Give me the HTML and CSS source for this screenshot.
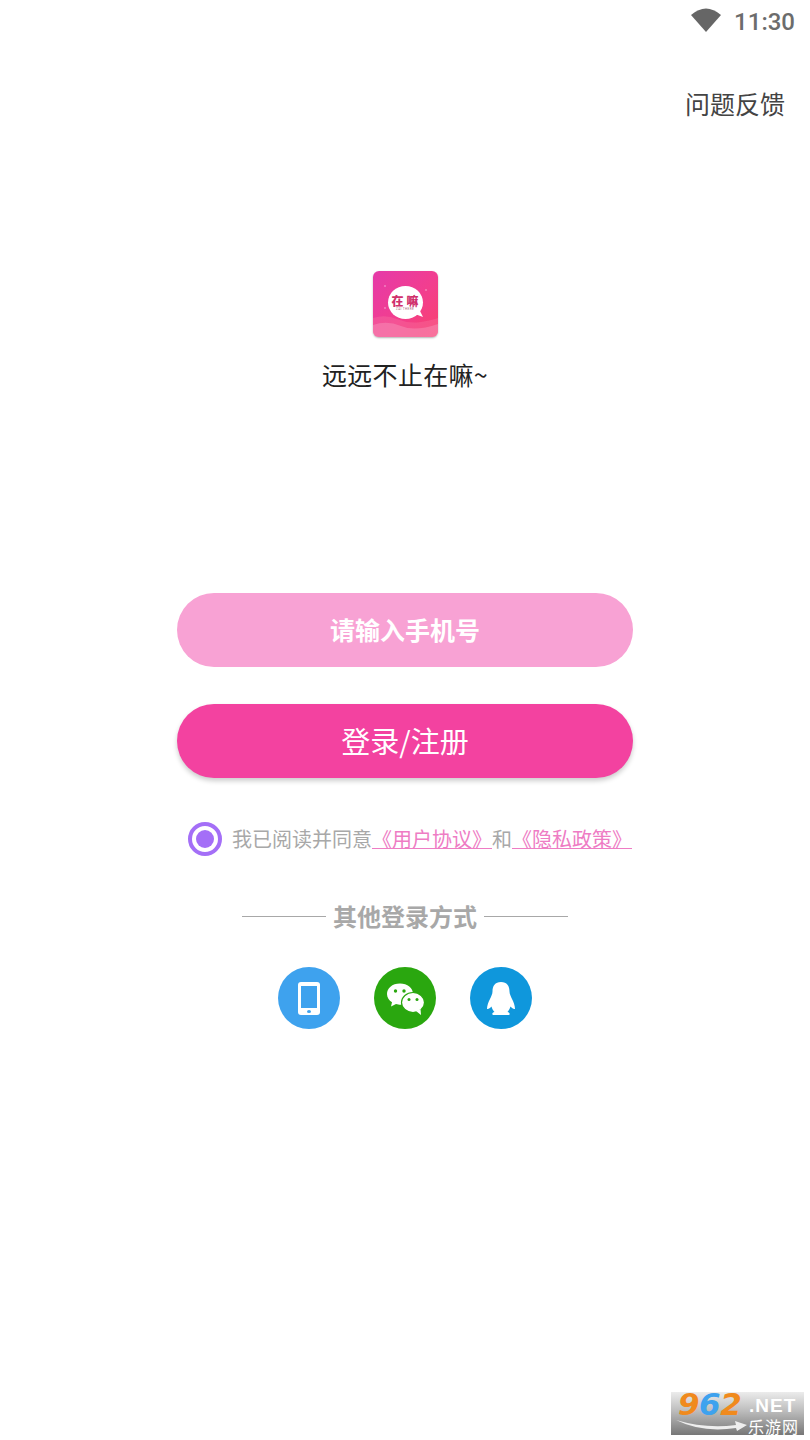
FILE: index.html
```html
<!DOCTYPE html>
<html lang="zh">
<head>
<meta charset="utf-8">
<title>登录</title>
<link rel="stylesheet" href="styles.css">
</head>
<body>
<div class="page">
  <div class="status">
    <svg class="wifi" width="32" height="26" viewBox="0 0 32 26"><path d="M1 8 Q16 -5 31 8 L16 25 Z" fill="#666"/></svg>
    <span class="time">11:30</span>
  </div>
  <div class="feedback-row"><span class="feedback">问题反馈</span></div>
  <div class="brand">
    <div class="app-icon">
      <svg class="waves" width="65" height="66" viewBox="0 0 65 66">
        <circle cx="12" cy="15" r="0.800" fill="#fff" opacity=".6"/>
        <circle cx="53" cy="19" r="0.800" fill="#fff" opacity=".6"/>
        <circle cx="12" cy="37" r="0.800" fill="#fff" opacity=".6"/>
        <path d="M0 47 Q12 43 24 48 T48 51 T65 47 V66 H0 Z" fill="#f7709f" opacity=".4"/>
        <path d="M0 54 Q14 49 28 55 T65 53 V66 H0 Z" fill="#f7a0c4" opacity=".4"/>
        <path d="M46 38 L50 46 L42 43 Z" fill="#fff"/>
      </svg>
      <div class="bubble">
        <span class="bubble-name">在嘛</span>
        <span class="bubble-sub">ZAI THERE</span>
      </div>
    </div>
    <p class="slogan">远远不止在嘛~</p>
  </div>
  <div class="actions">
    <div class="btn btn-phone">请输入手机号</div>
    <div class="btn btn-login">登录/注册</div>
  </div>
  <div class="agree">
    <span class="radio"><span class="radio-dot"></span></span>
    <span class="agree-text">我已阅读并同意<a class="link">《用户协议》</a>和<a class="link">《隐私政策》</a></span>
  </div>
  <div class="divider"><span class="rule"></span><span class="divider-text">其他登录方式</span><span class="rule"></span></div>
  <div class="socials">
    <span class="social social-phone">
      <svg width="62" height="62" viewBox="0 0 62 62"><rect x="20" y="15" width="22" height="33" rx="3" fill="#fff"/><rect x="23" y="19" width="16" height="22" fill="#3ea2ee"/><ellipse cx="31" cy="44.500" rx="2" ry="1.600" fill="#3ea2ee"/></svg>
    </span>
    <span class="social social-wechat">
      <svg width="62" height="62" viewBox="0 0 62 62">
        <path d="M26 16.500 C18 16.500 13 21.500 13 27 C13 30.500 15 33.500 18 35.200 L17 39.500 L22 37 C23.500 37.500 25 37.700 27 37.700 C36 37.700 39 32 39 27 C39 21 33.500 16.500 26 16.500 Z" fill="#fff"/>
        <ellipse cx="39" cy="35.500" rx="11.500" ry="10" fill="#fff" stroke="#2aa70f" stroke-width="1.200"/>
        <path d="M42 44 L47 48 L46.500 42 Z" fill="#fff"/>
        <circle cx="21.500" cy="24" r="1.700" fill="#2aa70f"/><circle cx="30" cy="24" r="1.700" fill="#2aa70f"/>
        <circle cx="35" cy="32.500" r="1.500" fill="#2aa70f"/><circle cx="43" cy="32.500" r="1.500" fill="#2aa70f"/>
      </svg>
    </span>
    <span class="social social-qq">
      <svg width="62" height="62" viewBox="0 0 62 62"><path d="M31 15 C25 15 22.500 19 22.500 24.500 C22.500 27 21 29.500 20 32 C18.500 35 17 38.500 17 42 C18.500 42.500 20 41 21.500 39.500 C22 41.500 23 43.500 24.500 45 C22.500 45.500 21.500 47 23 48 H39 C40.500 47 39.500 45.500 37.500 45 C39 43.500 40 41.500 40.500 39.500 C42 41 43.500 42.500 45 42 C45 38.500 43.500 35 42 32 C41 29.500 39.500 27 39.500 24.500 C39.500 19 37 15 31 15 Z" fill="#fff"/></svg>
    </span>
  </div>
  <div class="watermark">
    <svg class="wm-swoosh" width="72" height="14" viewBox="0 0 72 14"><path d="M0 0 Q30 9 60 5 L59 1 L71 5 L61 11 L60 8 Q26 13 0 0 Z" fill="#eee"/></svg>
    <span class="wm-num"><span class="wm-o">9</span><span class="wm-b">6</span><span class="wm-o">2</span></span>
    <span class="wm-net">.NET</span>
    <span class="wm-cn">乐游网</span>
  </div>
</div>
</body>
</html>
```
FILE: styles.css
```css
* { box-sizing: border-box; }
html, body { margin: 0; padding: 0; background: #fff; }
body { font-family: "Noto Sans CJK SC", "Roboto", sans-serif; }
.page { position: relative; width: 810px; height: 1440px; overflow: hidden; background: #fff; }

.status { display: flex; justify-content: flex-end; align-items: center; height: 40px; padding: 4px 15px 0 0; }
.wifi { margin-right: 12px; margin-bottom: 4px; }
.time { font-family: "Roboto", sans-serif; font-weight: 500; font-size: 24px; line-height: 36px; color: #6c6c6c; }

.feedback-row { display: flex; justify-content: flex-end; padding: 0 25px 0 0; margin-top: 43px; height: 40px; }
.feedback { font-size: 25px; line-height: 40px; color: #444; }

.brand { display: flex; flex-direction: column; align-items: center; margin-top: 148px; }
.app-icon { position: relative; width: 65px; height: 66px; border-radius: 6px; overflow: hidden; background: linear-gradient(135deg, #e53aa9 0%, #f23e8e 55%, #f9416c 100%); box-shadow: 0 1px 2px rgba(0,0,0,.3); }
.waves { display: block; }
.bubble { position: absolute; left: 15px; top: 15px; width: 35px; height: 33px; border-radius: 50%; background: #fff; display: flex; flex-direction: column; align-items: center; justify-content: center; }
.bubble-name { font-size: 12px; line-height: 12px; font-weight: 900; color: #d0306c; letter-spacing: 3px; margin: 1px -3px 0 0; white-space: nowrap; }
.bubble-sub { font-family: "Roboto", sans-serif; font-size: 3px; line-height: 4px; color: #a67; letter-spacing: .4px; white-space: nowrap; }
.slogan { margin: 18px 0 0; font-size: 25px; line-height: 38px; color: #222; letter-spacing: .3px; }

.actions { display: flex; flex-direction: column; align-items: center; gap: 37px; margin-top: 200px; }
.btn { width: 456px; height: 74px; border-radius: 37px; display: flex; align-items: center; justify-content: center; color: #fff; padding-bottom: 3px; }
.btn-phone { background: #f8a2d4; font-size: 25px; font-weight: 700; }
.btn-login { background: #f342a0; font-size: 29px; box-shadow: 0 3px 5px rgba(0,0,0,.2); }

.agree { display: flex; align-items: center; margin: 44px 0 0 188px; height: 34px; }
.radio { width: 34px; height: 34px; border-radius: 50%; border: 4px solid #a46ff7; display: flex; align-items: center; justify-content: center; }
.radio-dot { width: 18px; height: 18px; border-radius: 50%; background: #a46ff7; }
.agree-text { margin-left: 10px; font-size: 20px; line-height: 34px; color: #a8a8a8; white-space: nowrap; }
.link { color: #ee7cc4; text-decoration: underline; text-underline-offset: 1px; text-decoration-thickness: 1px; }

.divider { display: flex; align-items: center; justify-content: center; gap: 7px; margin-top: 43px; height: 34px; }
.rule { width: 84px; height: 1px; background: #a8a8a8; }
.divider-text { font-size: 24px; line-height: 34px; font-weight: 700; color: #a8a8a8; }

.socials { display: flex; justify-content: center; gap: 34px; margin-top: 34px; }
.social { width: 62px; height: 62px; border-radius: 50%; display: block; }
.social svg { display: block; }
.social-phone { background: #3ea2ee; }
.social-wechat { background: #2aa70f; }
.social-qq { background: #0f97dc; }

.watermark { position: absolute; left: 671px; top: 1392px; width: 133px; height: 43px; background: linear-gradient(180deg, #ececec 0%, #bbb 45%, #777 100%); }
.wm-num { position: absolute; left: 7px; top: -3px; font-family: "DejaVu Sans", sans-serif; font-size: 31px; line-height: 30px; font-weight: 700; font-style: italic; letter-spacing: -.5px; white-space: nowrap; }
.wm-o { color: #f08a1d; }
.wm-b { color: #3ea2ee; }
.wm-net { position: absolute; left: 78px; top: 3px; font-family: "Liberation Sans", sans-serif; font-size: 19px; font-weight: 700; line-height: 22px; color: #fff; letter-spacing: 1px; white-space: nowrap; }
.wm-cn { position: absolute; left: 77px; top: 26px; font-size: 16px; line-height: 17px; color: #fff; letter-spacing: 1px; white-space: nowrap; }
.wm-swoosh { position: absolute; left: 5px; top: 28px; }
```
